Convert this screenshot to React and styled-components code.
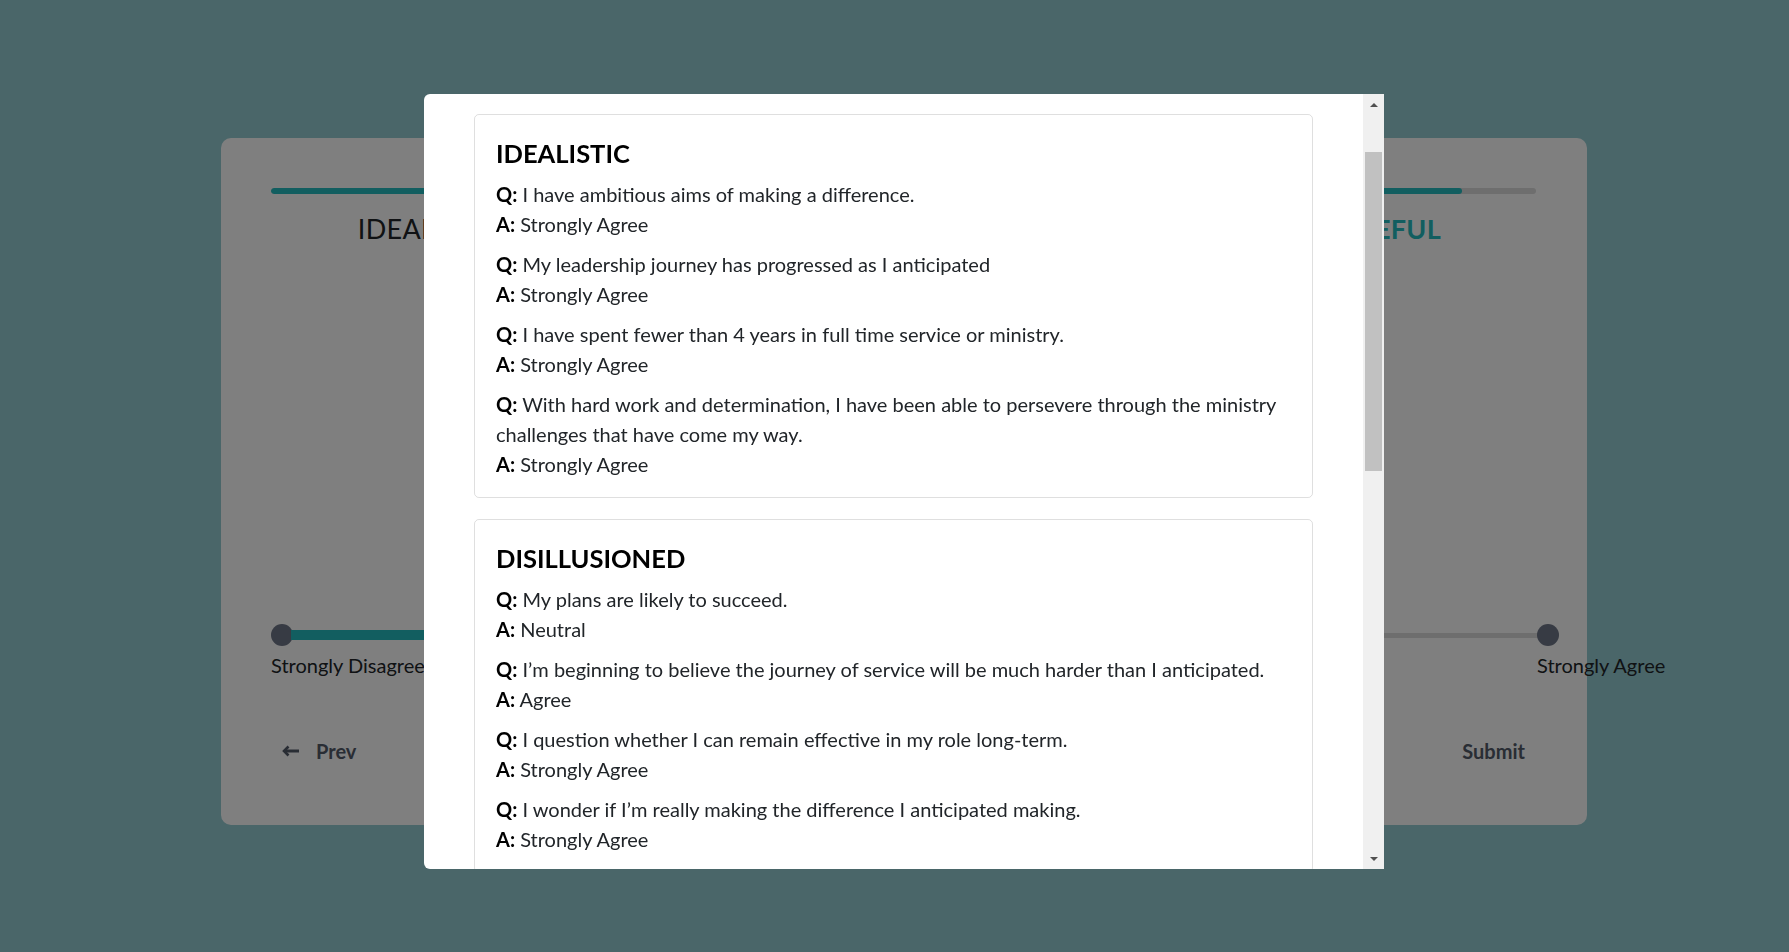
import React, { useLayoutEffect, useRef } from "react";
import styled, { createGlobalStyle } from "styled-components";

const GlobalStyle = createGlobalStyle`
  html, body {
    margin: 0;
    padding: 0;
  }
  body {
    background: #94ccd2;
    font-family: Lato, "Noto Sans", sans-serif;
    color: #212529;
    overflow: hidden;
  }
`;

const Page = styled.div`
  width: 1789px;
  height: 952px;
  box-sizing: border-box;
  padding: 138px 202px 0 221px;
`;

const QuizCard = styled.section`
  background: #fff;
  border-radius: 10px;
  height: 687px;
  box-sizing: border-box;
  padding: 50px 51px 51px 50px;
  display: flex;
  flex-direction: column;
`;

const Progress = styled.div`
  height: 6px;
  border-radius: 3px;
  background: #dcdcdc;
  overflow: hidden;
`;

const ProgressFill = styled.div`
  height: 100%;
  border-radius: 3px;
  background: #24bcc0;
`;

const Stages = styled.div`
  display: grid;
  grid-template-columns: repeat(4, 1fr);
  margin-top: 19px;
`;

const Stage = styled.div`
  text-align: center;
  font-size: 27px;
  line-height: 31px;
  font-weight: ${(p) => (p.$active ? 700 : 400)};
  color: ${(p) => (p.$active ? "#24bcc0" : "#212529")};
  letter-spacing: 0.3px;
`;

const QuestionArea = styled.div`
  flex: 1;
  display: flex;
  align-items: center;
  justify-content: center;
`;

const QuestionText = styled.p`
  max-width: 760px;
  text-align: center;
  font-size: 28px;
  line-height: 1.4;
  margin: 0;
`;

const Slider = styled.div`
  display: grid;
  grid-template-columns: 22px 1fr 22px;
  align-items: center;
  margin-right: -23px;
`;

const Knob = styled.span`
  width: 22px;
  height: 22px;
  border-radius: 50%;
  background: #6f7788;
`;

const Track = styled.div`
  display: flex;
  align-items: center;
  margin: 0 -2px;
`;

const TrackFill = styled.div`
  height: 10px;
  background: #24bcc0;
`;

const TrackRest = styled.div`
  flex: 1;
  height: 5px;
  background: #dcdcdc;
`;

const ScaleLabel = styled.span`
  white-space: nowrap;
  font-size: 20px;
  line-height: 30px;
  margin-top: 4px;
`;

const Buttons = styled.div`
  display: flex;
  justify-content: space-between;
  margin-top: 48px;
`;

const NavButton = styled.button`
  display: flex;
  align-items: center;
  gap: 16px;
  border: none;
  background: none;
  padding: 12px 11px;
  font-family: inherit;
  font-size: 20px;
  line-height: 22px;
  font-weight: 700;
  color: #525a68;
  cursor: pointer;
`;

const Overlay = styled.div`
  position: fixed;
  inset: 0;
  background: rgba(0, 0, 0, 0.5);
  display: flex;
  justify-content: center;
  align-items: flex-start;
  padding: 94px 0 0 19px;
  box-sizing: border-box;
`;

const Modal = styled.div`
  width: 960px;
  height: 775px;
  background: #fff;
  border-radius: 6px 0 0 6px;
  display: flex;
  overflow: hidden;
`;

const ModalBody = styled.div`
  flex: 1;
  overflow-y: scroll;
  scrollbar-width: none;
`;

const ScrollBar = styled.div`
  width: 21px;
  flex: none;
  background: #f0f0f0;
  display: flex;
  flex-direction: column;
`;

const ScrollArrow = styled.div`
  height: 21px;
  display: flex;
  align-items: center;
  justify-content: center;

  &::before {
    content: "";
    border-left: 4.5px solid transparent;
    border-right: 4.5px solid transparent;
    ${(p) => (p.$down ? "border-top" : "border-bottom")}: 4px solid #505050;
  }
`;

const ScrollTrack = styled.div`
  flex: 1;
  padding: 37px 2px 0;
`;

const ScrollThumb = styled.div`
  height: 319px;
  background: #c1c1c1;
`;

const ModalInner = styled.div`
  padding: 0 50px 20px;
`;

const ModalHeader = styled.h3`
  margin: 0;
  height: 110px;
  box-sizing: border-box;
  padding-top: 30px;
  font-size: 28px;
  font-weight: 700;
`;

const ResultCard = styled.div`
  border: 1px solid rgba(0, 0, 0, 0.125);
  border-radius: 5px;
  padding: 22px 21px 18px;
  margin-bottom: 21px;
`;

const ResultTitle = styled.h4`
  margin: 0 0 10px;
  font-size: 25.5px;
  line-height: 32px;
  font-weight: 700;
  color: #000;
`;

const QA = styled.div`
  font-size: 20px;
  line-height: 30px;
  & + & {
    margin-top: 10px;
  }
`;

const Line = styled.div`
  b {
    font-weight: 700;
    color: #000;
  }
`;

const ArrowLeft = () => (
  <svg width="18" height="12" viewBox="0 0 18 12">
    <path d="M2 6H17" stroke="currentColor" strokeWidth="3" />
    <path d="M6.5 1.5L2 6l4.5 4.5" stroke="currentColor" strokeWidth="2.6" fill="none" />
  </svg>
);

const results = [
  {
    title: "IDEALISTIC",
    items: [
      ["I have ambitious aims of making a difference.", "Strongly Agree"],
      ["My leadership journey has progressed as I anticipated", "Strongly Agree"],
      ["I have spent fewer than 4 years in full time service or ministry.", "Strongly Agree"],
      [
        "With hard work and determination, I have been able to persevere through the ministry challenges that have come my way.",
        "Strongly Agree",
      ],
    ],
  },
  {
    title: "DISILLUSIONED",
    items: [
      ["My plans are likely to succeed.", "Neutral"],
      ["I’m beginning to believe the journey of service will be much harder than I anticipated.", "Agree"],
      ["I question whether I can remain effective in my role long-term.", "Strongly Agree"],
      ["I wonder if I’m really making the difference I anticipated making.", "Strongly Agree"],
    ],
  },
  {
    title: "REALISTIC",
    items: [
      ["I have learned to accept the limits of what I can accomplish.", "Agree"],
      ["I can name the losses I have experienced in ministry.", "Neutral"],
      ["I have adjusted my expectations to fit my circumstances.", "Agree"],
      ["I am learning to rest even when the work is unfinished.", "Disagree"],
    ],
  },
  {
    title: "HOPEFUL",
    items: [
      ["I see signs of growth in the people I serve.", "Agree"],
      ["I am confident that my work has lasting value.", "Strongly Agree"],
      ["I look forward to the next season of my leadership.", "Strongly Agree"],
      ["I have people around me who encourage me to keep going.", "Agree"],
    ],
  },
];

export default function App() {
  const bodyRef = useRef(null);

  useLayoutEffect(() => {
    if (bodyRef.current) bodyRef.current.scrollTop = 90;
  }, []);

  return (
    <>
      <GlobalStyle />
      <Page>
        <QuizCard>
          <Progress>
            <ProgressFill style={{ width: `${(16 / 17) * 100}%` }} />
          </Progress>
          <Stages>
            <Stage>IDEALISTIC</Stage>
            <Stage>DISILLUSIONED</Stage>
            <Stage>REALISTIC</Stage>
            <Stage $active>HOPEFUL</Stage>
          </Stages>
          <QuestionArea>
            <QuestionText>I have people around me who encourage me to keep going.</QuestionText>
          </QuestionArea>
          <Slider>
            <Knob />
            <Track>
              <TrackFill style={{ width: "60%" }} />
              <TrackRest />
            </Track>
            <Knob />
            <ScaleLabel>Strongly Disagree</ScaleLabel>
            <span />
            <ScaleLabel>Strongly Agree</ScaleLabel>
          </Slider>
          <Buttons>
            <NavButton>
              <ArrowLeft />
              Prev
            </NavButton>
            <NavButton>Submit</NavButton>
          </Buttons>
        </QuizCard>
      </Page>
      <Overlay>
        <Modal>
          <ModalBody ref={bodyRef}>
            <ModalInner>
              <ModalHeader>Your Answers</ModalHeader>
              {results.map((r) => (
                <ResultCard key={r.title}>
                  <ResultTitle>{r.title}</ResultTitle>
                  {r.items.map(([q, a]) => (
                    <QA key={q}>
                      <Line>
                        <b>Q:</b> {q}
                      </Line>
                      <Line>
                        <b>A:</b> {a}
                      </Line>
                    </QA>
                  ))}
                </ResultCard>
              ))}
            </ModalInner>
          </ModalBody>
          <ScrollBar>
            <ScrollArrow />
            <ScrollTrack>
              <ScrollThumb />
            </ScrollTrack>
            <ScrollArrow $down />
          </ScrollBar>
        </Modal>
      </Overlay>
    </>
  );
}
